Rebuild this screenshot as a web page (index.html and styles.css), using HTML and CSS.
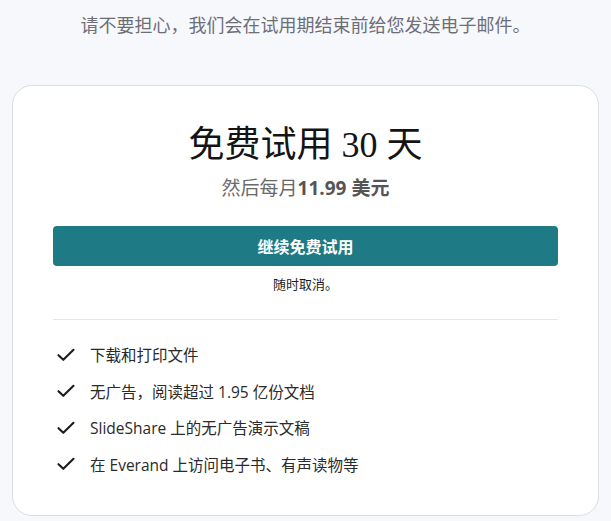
FILE: index.html
```html
<!DOCTYPE html>
<html lang="zh-CN">
<head>
<meta charset="utf-8">
<title>免费试用</title>
<link rel="stylesheet" href="styles.css">
</head>
<body>
<div class="page">
  <p class="notice">请不要担心，我们会在试用期结束前给您发送电子邮件。</p>
  <div class="card">
    <h1 class="title">免费试用 30 天</h1>
    <p class="price">然后每月<strong>11.99 美元</strong></p>
    <button class="cta" type="button">继续免费试用</button>
    <p class="cancel">随时取消。</p>
    <hr class="divider">
    <ul class="features">
      <li class="feature"><svg class="check" viewBox="0 0 18 14" width="18" height="14" aria-hidden="true"><path d="M1.5 7.2 L6.3 11.8 L16.5 1.8" fill="none" stroke="#1c1c1c" stroke-width="2.1" stroke-linecap="round" stroke-linejoin="round"/></svg><span>下载和打印文件</span></li>
      <li class="feature"><svg class="check" viewBox="0 0 18 14" width="18" height="14" aria-hidden="true"><path d="M1.5 7.2 L6.3 11.8 L16.5 1.8" fill="none" stroke="#1c1c1c" stroke-width="2.1" stroke-linecap="round" stroke-linejoin="round"/></svg><span>无广告，阅读超过 1.95 亿份文档</span></li>
      <li class="feature"><svg class="check" viewBox="0 0 18 14" width="18" height="14" aria-hidden="true"><path d="M1.5 7.2 L6.3 11.8 L16.5 1.8" fill="none" stroke="#1c1c1c" stroke-width="2.1" stroke-linecap="round" stroke-linejoin="round"/></svg><span>SlideShare 上的无广告演示文稿</span></li>
      <li class="feature"><svg class="check" viewBox="0 0 18 14" width="18" height="14" aria-hidden="true"><path d="M1.5 7.2 L6.3 11.8 L16.5 1.8" fill="none" stroke="#1c1c1c" stroke-width="2.1" stroke-linecap="round" stroke-linejoin="round"/></svg><span>在 Everand 上访问电子书、有声读物等</span></li>
    </ul>
  </div>
</div>
</body>
</html>
```

FILE: styles.css
```css
html, body {
  margin: 0;
  padding: 0;
  background: #f7f8fc;
}
body {
  font-family: "Open Sans", "Noto Sans CJK SC", sans-serif;
  color: #1c1c1c;
}
.page {
  padding: 12px 12px 0 12px;
  display: flex;
  flex-direction: column;
  align-items: stretch;
}
.notice {
  margin: 0;
  text-align: center;
  font-size: 18px;
  line-height: 24px;
  color: #6d6e78;
  font-family: "Noto Sans CJK SC", sans-serif;
}
.card {
  margin-top: 49px;
  background: #ffffff;
  border: 1px solid #dcdde0;
  border-radius: 20px;
  padding: 38px 40px 39px 40px;
  display: flex;
  flex-direction: column;
  align-items: stretch;
  height: 431px;
  box-sizing: border-box;
}
.title {
  margin: 0;
  text-align: center;
  font-family: "Liberation Serif", "Noto Sans CJK SC", serif;
  font-weight: 400;
  font-size: 36px;
  line-height: 43px;
  color: #141414;
}
.price {
  margin: 7px 0 0 0;
  text-align: center;
  font-size: 19px;
  line-height: 25px;
  color: #6a6a6a;
  font-family: "Noto Sans CJK SC", sans-serif;
}
.price strong {
  color: #555555;
  font-weight: 700;
  font-family: "Open Sans", "Noto Sans CJK SC", sans-serif;
}
.cta {
  margin-top: 25px;
  height: 40px;
  border: none;
  border-radius: 4px;
  background: #1e7b85;
  color: #ffffff;
  font-family: "Noto Sans CJK SC", sans-serif;
  font-weight: 700;
  font-size: 16px;
}
.cancel {
  margin: 9px 0 0 0;
  text-align: center;
  font-size: 13px;
  line-height: 18px;
  color: #1c1c1c;
  font-family: "Noto Sans CJK SC", sans-serif;
}
.divider {
  margin: 26px 0 0 0;
  border: none;
  border-top: 1px solid #e6e6e8;
  height: 0;
}
.features {
  list-style: none;
  margin: 23px 0 0 0;
  padding: 0;
  display: flex;
  flex-direction: column;
  gap: 12.4px;
}
.feature {
  display: flex;
  align-items: center;
  height: 24px;
  font-size: 15.5px;
  color: #2a2a2a;
}
.check {
  margin-left: 4px;
  margin-right: 15px;
  flex: none;
}
```
